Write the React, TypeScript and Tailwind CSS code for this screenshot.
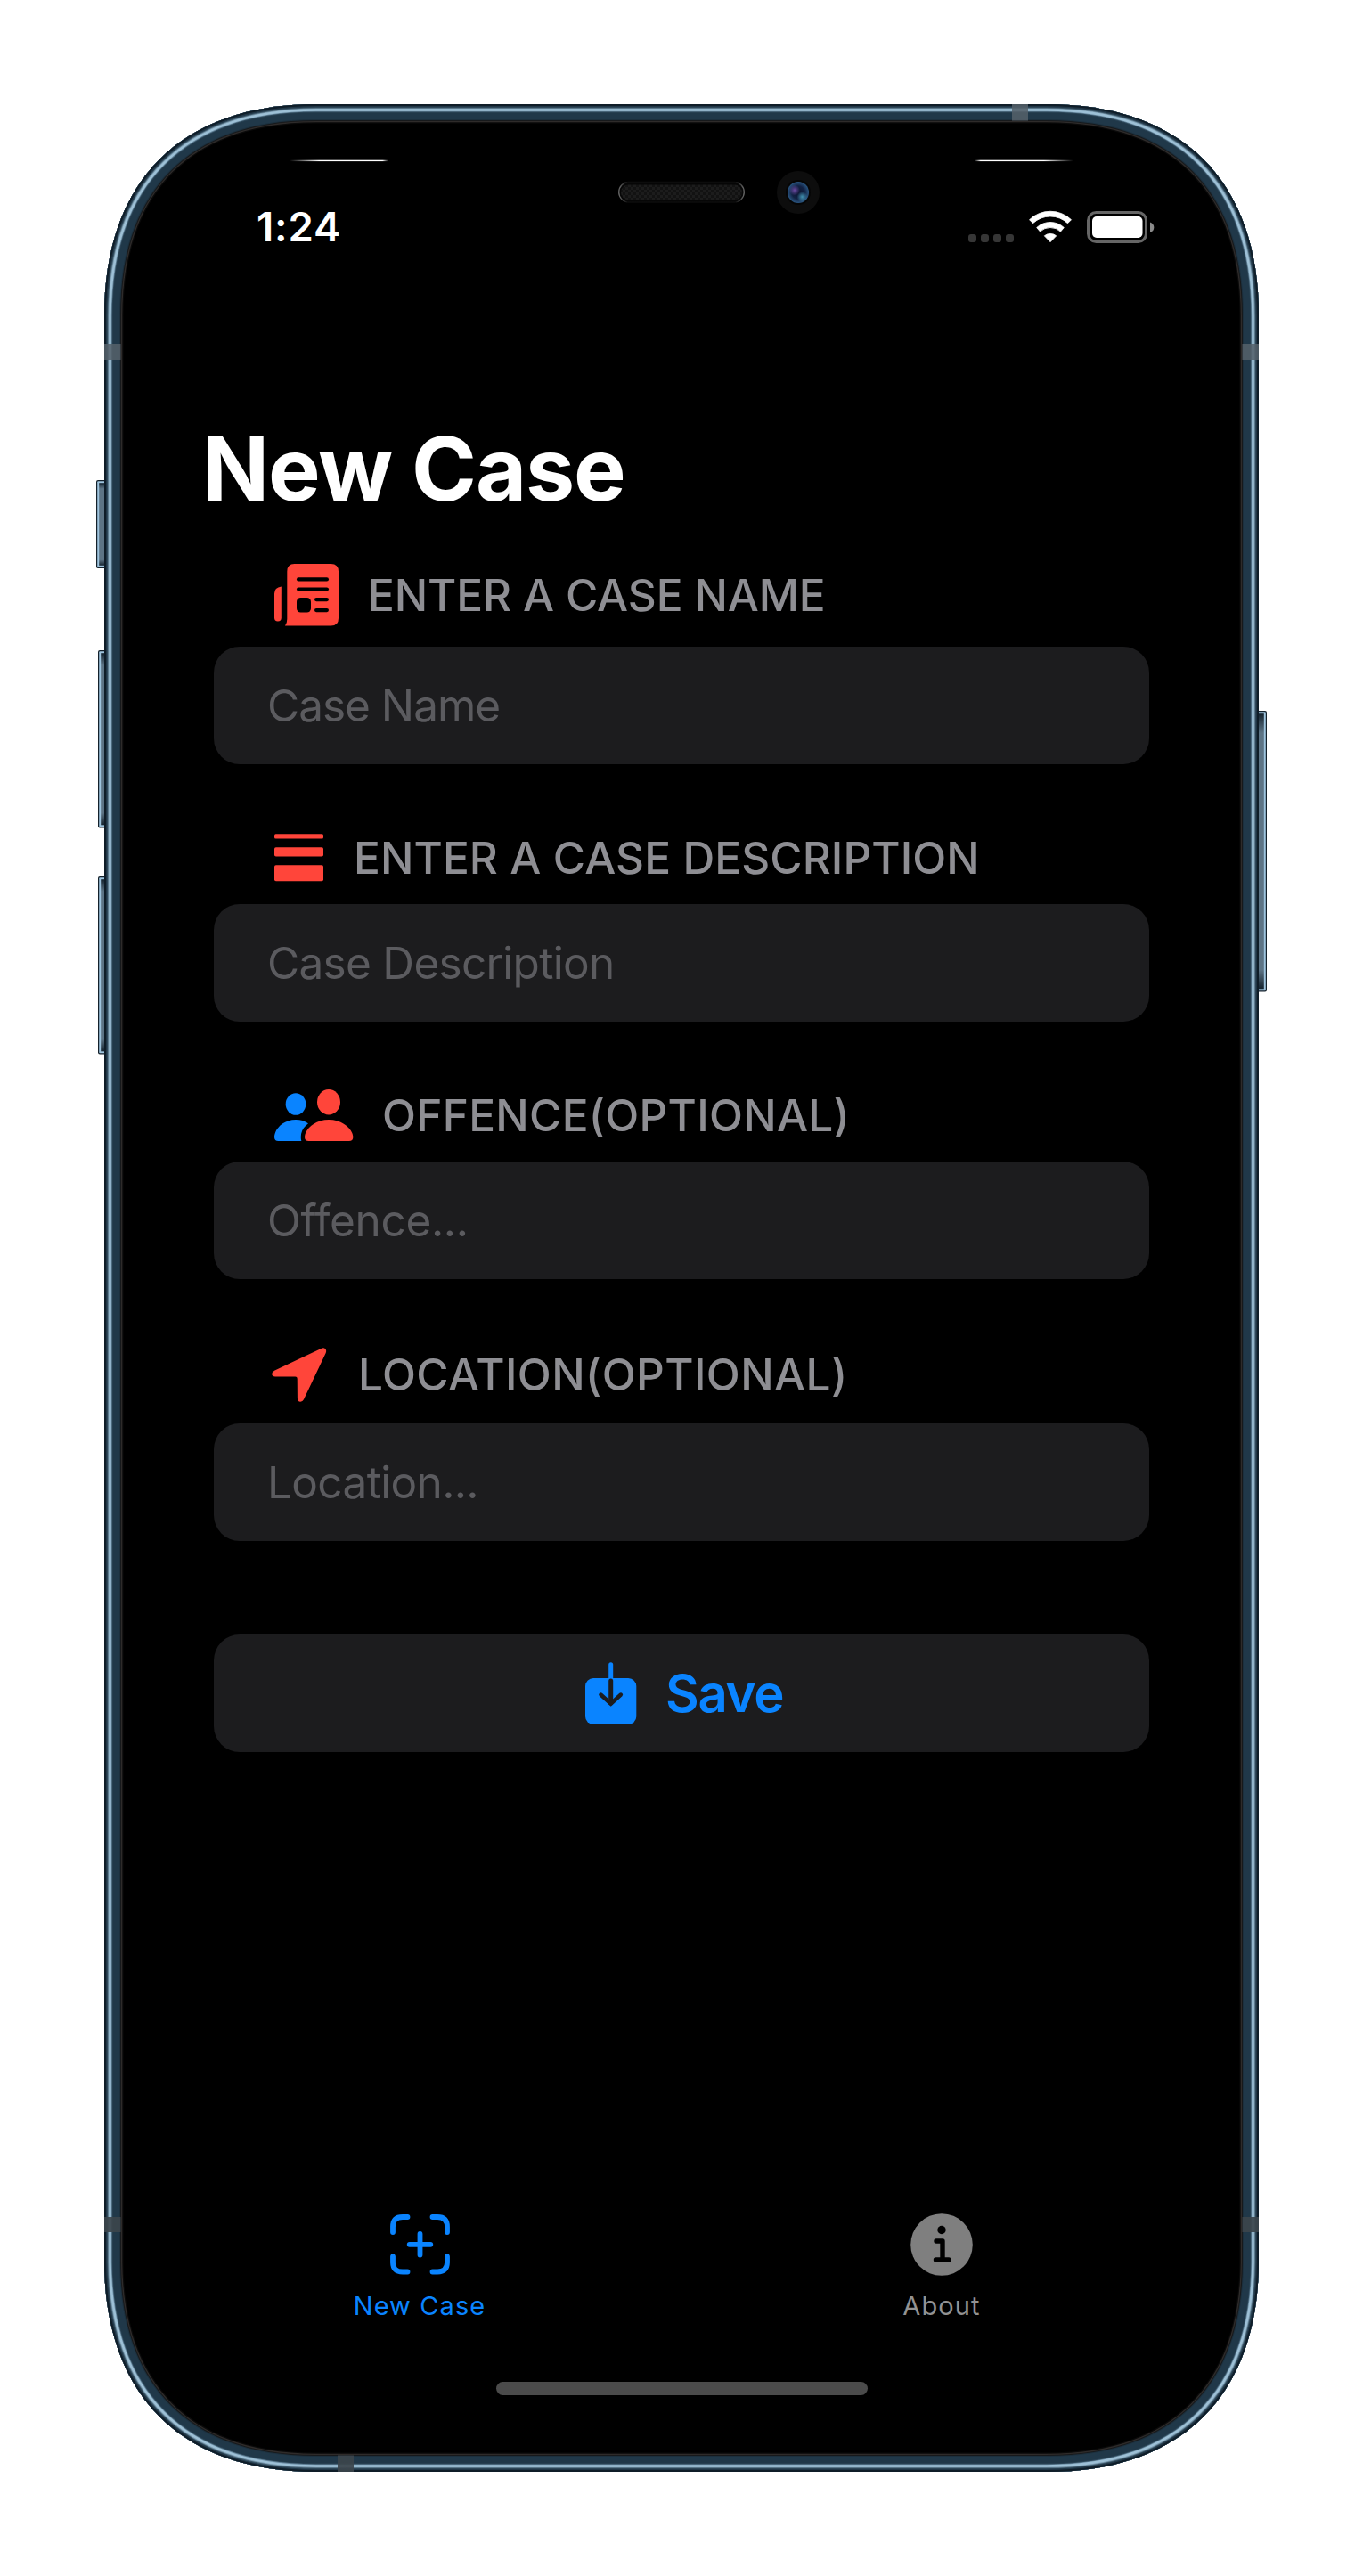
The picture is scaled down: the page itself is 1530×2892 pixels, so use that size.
import type { ReactNode } from 'react';

const BODY =
  'M355 117 H1175 C1327 117 1413 203 1413 355 V2537 C1413 2689 1327 2775 1175 2775 H355 C203 2775 117 2689 117 2537 V355 C117 203 203 117 355 117 Z';

// Depth of each metal layer, measured inwards from the outer edge.
const LAYERS: [number, string][] = [
  [21.5, '#0a0a0a'],
  [20.3, '#2e2b2a'],
  [19, '#17191b'],
  [18, '#1c303e'],
  [17, '#203849'],
  [9.5, '#2c4658'],
  [8.6, '#64849a'],
  [7.8, '#9dc0d6'],
  [5.3, '#7796aa'],
  [4.4, '#3b5668'],
  [3.4, '#203646'],
  [2, '#0f1d28'],
];

function SideButton({ x, y, w, h }: { x: number; y: number; w: number; h: number }) {
  return (
    <g>
      <rect x={x} y={y} width={w} height={h} rx="2" fill="#14212b" />
      <rect x={x + 1.2} y={y + 1.2} width={w - 2.4} height={h - 2.4} rx="1" fill="#9ec4de" />
      <rect x={x + 3.2} y={y + 3.2} width={w - 6.4} height={h - 6.4} fill="url(#key)" />
    </g>
  );
}

function Hardware() {
  return (
    <svg className="absolute inset-0" width="1530" height="2892" viewBox="0 0 1530 2892" aria-hidden="true">
      <defs>
        <clipPath id="body"><path d={BODY} /></clipPath>
        <linearGradient id="key" x1="0" y1="0" x2="0" y2="1">
          <stop offset="0" stopColor="#14222d" />
          <stop offset="0.07" stopColor="#5d7485" />
          <stop offset="0.93" stopColor="#5d7485" />
          <stop offset="1" stopColor="#14222d" />
        </linearGradient>
        <linearGradient id="glintL">
          <stop offset="0" stopColor="#fff" stopOpacity="0" />
          <stop offset="0.3" stopColor="#fff" />
          <stop offset="0.94" stopColor="#fff" />
          <stop offset="1" stopColor="#fff" stopOpacity="0" />
        </linearGradient>
        <linearGradient id="glintR">
          <stop offset="0" stopColor="#fff" stopOpacity="0" />
          <stop offset="0.06" stopColor="#fff" />
          <stop offset="0.7" stopColor="#fff" />
          <stop offset="1" stopColor="#fff" stopOpacity="0" />
        </linearGradient>
        <linearGradient id="slot">
          <stop offset="0" stopColor="#6a6a6a" />
          <stop offset="0.07" stopColor="#0c0c0c" />
          <stop offset="0.93" stopColor="#0c0c0c" />
          <stop offset="1" stopColor="#6a6a6a" />
        </linearGradient>
        <pattern id="mesh" width="6" height="6" patternUnits="userSpaceOnUse">
          <rect width="6" height="6" fill="#121212" />
          <rect width="3" height="3" fill="#1c1c1c" />
          <rect x="3" y="3" width="3" height="3" fill="#1c1c1c" />
        </pattern>
        <radialGradient id="lens">
          <stop offset="0" stopColor="#0b1430" />
          <stop offset="0.6" stopColor="#122244" />
          <stop offset="1" stopColor="#2a5580" />
        </radialGradient>
        <radialGradient id="violet">
          <stop offset="0" stopColor="#6a4aa0" />
          <stop offset="1" stopColor="#6a4aa0" stopOpacity="0" />
        </radialGradient>
        <radialGradient id="teal">
          <stop offset="0" stopColor="#4191b0" />
          <stop offset="1" stopColor="#4191b0" stopOpacity="0" />
        </radialGradient>
      </defs>

      <SideButton x={108} y={539} w={14} h={99} />
      <SideButton x={110} y={730} w={12} h={199.5} />
      <SideButton x={110} y={984} w={12} h={199.5} />
      <SideButton x={1408} y={798} w={14} h={315.5} />

      <path d={BODY} fill="#000" />
      <g clipPath="url(#body)" fill="none">
        {LAYERS.map(([depth, color]) => (
          <path key={depth} d={BODY} stroke={color} strokeWidth={depth * 2} />
        ))}
      </g>

      <g fill="#55616a" fillOpacity="0.86">
        <rect x="117" y="386" width="18.5" height="18" />
        <rect x="1394.5" y="386" width="18.5" height="18" />
        <rect x="1136" y="117" width="18" height="18.5" />
      </g>
      <g fill="#3c454c" fillOpacity="0.92">
        <rect x="117" y="2489" width="18.5" height="17" />
        <rect x="1394.5" y="2489" width="18.5" height="17" />
        <rect x="379" y="2756.5" width="18" height="18.5" />
      </g>

      <rect x="325" y="179.7" width="111" height="1.4" fill="url(#glintL)" />
      <rect x="1094" y="179.7" width="111" height="1.4" fill="url(#glintR)" />

      <rect x="694.7" y="204.5" width="140.6" height="22.5" rx="11.2" fill="#060606" stroke="url(#slot)" strokeWidth="1.3" />
      <rect x="697" y="207.5" width="136" height="17" rx="8.5" fill="url(#mesh)" />
      <circle cx="896" cy="216" r="24" fill="#0d0d0d" />
      <circle cx="896" cy="216" r="14" fill="#060606" />
      <circle cx="896" cy="216" r="12" fill="url(#lens)" />
      <circle cx="892" cy="213.5" r="6" fill="url(#violet)" />
      <circle cx="900.5" cy="221" r="6" fill="url(#teal)" />
    </svg>
  );
}

function NewsIcon() {
  return (
    <svg width="72" height="70" viewBox="0 0 72 70" fill="#ff453a">
      <path d="M22.5 0 H63.5 Q72 0 72 8.5 V61 Q72 69.5 63.5 69.5 H12 Q14.3 66.5 14.3 62 V8.5 Q14.3 0 22.5 0 Z" />
      <path d="M7.8 25.5 V60.5 A3.9 3.9 0 0 1 0 60.5 V33.5 Q0 26.5 7.8 25.5 Z" />
      <g fill="#000">
        <rect x="25" y="15.3" width="36" height="4.2" rx="2.1" />
        <rect x="25" y="26.5" width="36" height="4.2" rx="2.1" />
        <rect x="25" y="38" width="16" height="16.5" rx="4.5" />
        <rect x="45" y="38" width="16" height="4.2" rx="2.1" />
        <rect x="45" y="50" width="16" height="4.2" rx="2.1" />
      </g>
    </svg>
  );
}

function BarsIcon() {
  return (
    <svg width="55" height="54" viewBox="0 0 55 54" fill="#ff453a">
      <rect width="55" height="5.2" y="0.3" rx="1.5" />
      <rect y="15.3" width="55" height="10.3" rx="1.8" />
      <rect y="35.3" width="55" height="18" rx="1.8" />
    </svg>
  );
}

function PeopleIcon() {
  return (
    <svg width="89" height="58" viewBox="0 0 89 58">
      <g fill="#0a84ff">
        <ellipse cx="24" cy="16.5" rx="11.3" ry="12.3" />
        <path d="M4.5 58 Q0 58 0 53.8 C0 44.5 10 34 24 34 C29.5 34 34.3 35.5 38 38.3 C31 43.5 28.5 50.5 30.3 58 Z" />
      </g>
      <g fill="#ff453a">
        <ellipse cx="61" cy="14.2" rx="13" ry="14.2" />
        <path d="M38.5 58 Q34 58 34 53.8 C34 45 45 34 61 34 C77 34 88.3 45 88.3 53.8 Q88.3 58 83.8 58 Z" />
      </g>
    </svg>
  );
}

function ArrowIcon() {
  return (
    <svg width="62" height="61" viewBox="0 0 62 61" fill="#ff453a">
      <path d="M56 0.7 L3 25.7 Q0 27.3 0.2 29.8 Q0.7 32.4 4 32.4 L26.5 32.5 Q28.7 32.5 28.7 34.7 L28.9 57 Q29 60.6 32.3 60.8 Q34.7 60.7 35.9 58.3 L60.7 6 Q61.8 3.2 60.3 1.4 Q58.7 -0.3 56 0.7 Z" />
    </svg>
  );
}

function SaveIcon() {
  return (
    <svg width="58" height="70" viewBox="0 0 58 70" fill="none" strokeLinecap="round">
      <path d="M28.7 2.8 V22" stroke="#0a84ff" strokeWidth="5" />
      <rect y="18" width="57.3" height="52" rx="9" fill="#0a84ff" />
      <path d="M28.7 21 V46" stroke="#1c1c1e" strokeWidth="5" />
      <path d="M17.4 36.5 L28.7 46.7 L39.9 36.5" stroke="#1c1c1e" strokeWidth="4.4" />
    </svg>
  );
}

function NewCaseIcon() {
  return (
    <svg width="67" height="70" viewBox="0 -1 67 70" fill="none" stroke="#0a84ff" strokeWidth="5.8" strokeLinecap="round">
      <path d="M3 20 V14 Q3 3 14 3 H19.5 M47.5 3 H53 Q64 3 64 14 V20 M64 47.5 V53.5 Q64 64.5 53 64.5 H47.5 M19.5 64.5 H14 Q3 64.5 3 53.5 V47.5" />
      <path d="M33.5 22 V45.5 M21.7 33.8 H45.3" />
    </svg>
  );
}

function InfoIcon() {
  return (
    <svg width="70" height="70" viewBox="0 0 70 70">
      <circle cx="35" cy="35" r="34.8" fill="#7f7f7f" />
      <circle cx="35" cy="18.5" r="4.7" fill="#000" />
      <path d="M29 31 H36 V52 M28.5 52 H43" fill="none" stroke="#000" strokeWidth="5.4" strokeLinecap="round" strokeLinejoin="round" />
    </svg>
  );
}

function StatusIcons() {
  return (
    <div className="flex">
      <svg width="68" height="39" viewBox="1087 236 68 39" fill="#363636">
        <rect x="1087" y="263" width="9" height="9" rx="3" />
        <rect x="1101" y="263" width="9" height="9" rx="3" />
        <rect x="1115" y="263" width="9" height="9" rx="3" />
        <rect x="1129" y="263" width="9" height="9" rx="3" />
      </svg>
      <svg width="65" height="39" viewBox="0 0 65 39" fill="#fff" stroke="#fff" strokeWidth="0.8" strokeLinejoin="round">
        <path d="M0.5 10.7 A34 34 0 0 1 47.5 10.7 L43.5 14.7 A28.5 28.5 0 0 0 4.5 14.7 Z" />
        <path d="M8.7 19.5 A22.5 22.5 0 0 1 39.3 19.5 L35.5 24 A17 17 0 0 0 12.5 24 Z" />
        <path d="M17.3 28.8 A10.5 10.5 0 0 1 30.7 28.8 L24 35.7 Z" />
      </svg>
      <svg width="76" height="39" viewBox="1220 236 76 39">
        <rect x="1221.5" y="238.5" width="65" height="33" rx="9" fill="none" stroke="#666" strokeWidth="3" />
        <rect x="1226" y="243" width="56.5" height="24" rx="5" fill="#fff" />
        <path d="M1291 249.5 Q1295.3 251 1295.3 255.5 Q1295.3 259.5 1291 261 Z" fill="#8a8a8a" />
      </svg>
    </div>
  );
}

interface FieldProps {
  icon: ReactNode;
  label: string;
  placeholder: string;
  rowClass: string;
  labelClass: string;
  inputClass: string;
}

function Field({ icon, label, placeholder, rowClass, labelClass, inputClass }: FieldProps) {
  return (
    <section>
      <div className={`flex h-[72px] items-center ${rowClass}`}>
        {icon}
        <h2 className={`text-[49.5px] leading-[72px] font-medium whitespace-nowrap text-[#8e8e93] ${labelClass}`}>{label}</h2>
      </div>
      <div className="flex h-[132px] items-center rounded-[29px] bg-[#1c1c1e] pt-[2px] pl-[60px]">
        <span className={`text-[49.5px] leading-none text-[#5b5b5f] ${inputClass}`}>{placeholder}</span>
      </div>
    </section>
  );
}

export default function App() {
  return (
    <div className="relative h-[2892px] w-[1530px] overflow-hidden bg-white font-['Inter',sans-serif]">
      <Hardware />
      <div className="relative flex h-full flex-col">
        <header className="mt-[226px] flex h-[59px] items-center justify-between pr-[234px] pl-[288px]">
          <time className="text-[45.5px] font-semibold tracking-[0.86px] text-white">1:24</time>
          <StatusIcons />
        </header>

        <main className="mt-[191px] flex w-[1290px] flex-col pl-[240px]">
          <h1 className="-ml-[13px] text-[98.6px] leading-[100px] font-bold tracking-[-1.15px] text-white">New Case</h1>
          <div className="mt-[56px] flex flex-col gap-[69px]">
            <Field icon={<NewsIcon />} label="ENTER A CASE NAME" placeholder="Case Name" rowClass="mb-[22px] pl-[68px] gap-[33px]" labelClass="tracking-[-0.13px]" inputClass="tracking-[-1px]" />
            <Field icon={<BarsIcon />} label="ENTER A CASE DESCRIPTION" placeholder="Case Description" rowClass="mb-4 pl-[68px] gap-[34px]" labelClass="tracking-[0.1px]" inputClass="tracking-[-0.7px]" />
            <Field icon={<PeopleIcon />} label="OFFENCE(OPTIONAL)" placeholder="Offence..." rowClass="mb-4 pl-[68px] gap-[32px]" labelClass="tracking-[0.29px]" inputClass="tracking-[-0.35px]" />
            <Field icon={<ArrowIcon />} label="LOCATION(OPTIONAL)" placeholder="Location..." rowClass="mt-[2px] mb-[19px] pl-[65px] gap-[35px]" labelClass="tracking-[0.41px]" inputClass="tracking-[-0.65px]" />
          </div>
          <button className="mt-[105px] flex h-[132px] items-center gap-[32px] rounded-[29px] bg-[#1c1c1e] pl-[417px]">
            <SaveIcon />
            <span className="text-[58px] leading-[70px] font-semibold tracking-[-1.3px] text-[#0a84ff]">Save</span>
          </button>
        </main>

        <nav className="mt-[518px] ml-[178px] grid w-[1172px] grid-cols-2">
          <a className="flex flex-col items-center gap-[14px] text-[#0a84ff]">
            <NewCaseIcon />
            <span className="text-[29px] leading-[40px] font-normal tracking-[1.1px]">New Case</span>
          </a>
          <a className="flex flex-col items-center gap-[14px] text-[#929292]">
            <InfoIcon />
            <span className="text-[29px] leading-[40px] font-normal tracking-[1.1px]">About</span>
          </a>
        </nav>
        <div className="mt-[65px] ml-[557px] h-[15px] w-[417px] rounded-full bg-[#4b4b4b]" />
      </div>
    </div>
  );
}
